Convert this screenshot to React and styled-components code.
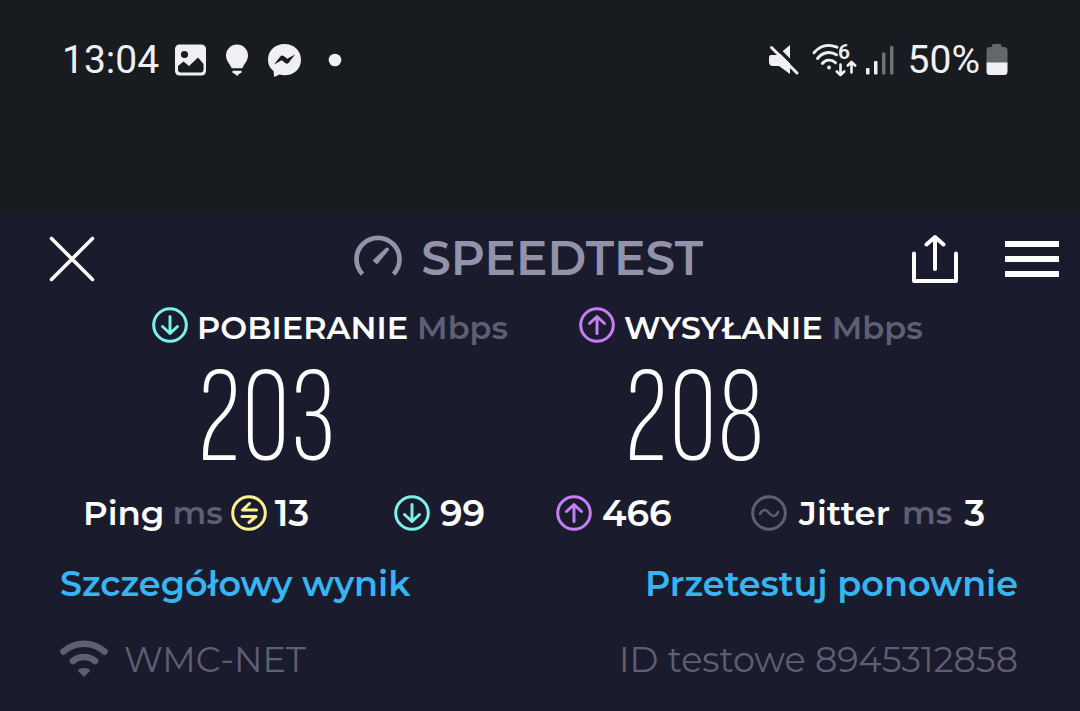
import React from "react";
import styled, { createGlobalStyle } from "styled-components";

const colors = {
  status: "#181c20",
  panel: "#1b1b2e",
  white: "#ffffff",
  soft: "#f0f0f2",
  muted: "#5f5e72",
  logo: "#9392ab",
  teal: "#7cf0ea",
  violet: "#c67df5",
  yellow: "#fdf08f",
  link: "#35b5f2",
};

const GlobalStyle = createGlobalStyle`
  * { box-sizing: border-box; }
  body { margin: 0; background: ${colors.panel}; }
`;

const Page = styled.div`
  min-height: 100vh;
  display: flex;
  flex-direction: column;
  background: ${colors.panel};
  color: ${colors.white};
  font-family: Montserrat, Inter, sans-serif;
`;

const StatusBar = styled.header`
  display: flex;
  justify-content: space-between;
  align-items: flex-start;
  padding: 40px 72px 131px 62px;
  background: ${colors.status};
  color: ${colors.soft};
  font-family: Roboto, sans-serif;
`;

const StatusGroup = styled.div`
  display: flex;
  align-items: center;
  height: 40px;
  gap: ${({ $gap }) => $gap}px;
`;

const StatusText = styled.span`
  font-size: 39px;
  line-height: 40px;
  white-space: nowrap;
`;

const Svg = styled.svg`
  display: block;
  flex: none;
  overflow: visible;
`;

const Panel = styled.main`
  flex: 1;
  display: flex;
  flex-direction: column;
`;

const TopBar = styled.div`
  display: grid;
  grid-template-columns: 6fr auto 7fr;
  align-items: center;
  padding: 24px 21px 0 48px;
`;

const Brand = styled.h1`
  display: flex;
  align-items: center;
  gap: 18px;
  margin: 0;
  color: ${colors.logo};
  font-size: 47px;
  line-height: 48px;
  font-weight: 600;
`;

const Actions = styled.div`
  display: flex;
  justify-content: flex-end;
  gap: 45px;
`;

const IconButton = styled.button`
  display: block;
  justify-self: start;
  padding: 0;
  border: 0;
  background: none;
  color: inherit;
  cursor: pointer;
`;

const Results = styled.section`
  display: grid;
  grid-template-columns: 1fr 1fr;
  padding: 24px 74px 0 152px;
`;

const ResultLabel = styled.h2`
  display: flex;
  align-items: flex-start;
  gap: 9px;
  margin: 0;
  font-size: 32px;
  line-height: 42px;
  font-weight: 600;
  white-space: nowrap;
`;

const Unit = styled.span`
  color: ${colors.muted};
  font-size: 32px;
`;

const ResultValue = styled.p`
  margin: 0;
  padding: 8px 0 0 45px;
  font-family: "Sofia Sans Extra Condensed", "Open Sans Condensed Light", Roboto, sans-serif;
  font-size: 138px;
  line-height: 124px;
  font-weight: 200;
`;

const Stats = styled.section`
  display: grid;
  grid-template-columns: 311fr 162fr 195fr 237fr;
  padding: 14px 92px 0 83px;
`;

const Stat = styled.div`
  display: flex;
  align-items: center;
  gap: ${({ $gap }) => $gap || 10}px;
  font-size: 34px;
  line-height: 36px;
  font-weight: 600;
  white-space: nowrap;
`;

const StatValue = styled.span`
  font-size: 36px;
`;

const Row = styled.div`
  display: flex;
  justify-content: space-between;
  align-items: center;
  padding: ${({ $top }) => $top}px 62px 0 60px;
`;

const Link = styled.a`
  color: ${colors.link};
  font-size: 35px;
  line-height: 40px;
  font-weight: 600;
  text-decoration: none;
`;

const Meta = styled.span`
  display: flex;
  align-items: center;
  gap: 16px;
  color: ${colors.muted};
  font-size: 35px;
  line-height: 40px;
  font-weight: 400;
`;

const shapes = {
  down: <path d="M18 9.500v17M10.500 19.500l7.500 7 7.500-7" />,
  up: <path d="M18 26.500v-17M10.500 16.500l7.500-7 7.500 7" />,
  ping: <path d="M25.500 15H11.500l7-6.500M11 21.500h14l-7 6" />,
  jitter: <path d="M9 19c2-5 6-5 9-1s7 4 9-1" strokeWidth="2.500" />,
};

function RoundIcon({ kind, color }) {
  return (
    <Svg width="36" height="36" viewBox="0 0 36 36" fill="none" stroke={color} strokeWidth="3" strokeLinecap="round" strokeLinejoin="round" aria-hidden="true">
      <circle cx="18" cy="18" r="16.300" />
      {shapes[kind]}
    </Svg>
  );
}

function Result({ kind, color, label, value }) {
  return (
    <div>
      <ResultLabel>
        <RoundIcon kind={kind} color={color} />
        {label}
        <Unit>Mbps</Unit>
      </ResultLabel>
      <ResultValue>{value}</ResultValue>
    </div>
  );
}

export default function App() {
  return (
    <Page>
      <GlobalStyle />
      <StatusBar>
        <StatusGroup $gap={16}>
          <StatusText>13:04</StatusText>
          <Svg width="32" height="32" viewBox="0 0 32 32">
            <rect x="0" y="0.500" width="31" height="31" rx="4.500" fill={colors.soft} />
            <circle cx="9.500" cy="10.500" r="3.600" fill={colors.status} />
            <path d="M3 22l5.500-4.500 5.500 4.500 9-8.500L28.500 20v5.500q0 3-3 3H6q-3 0-3-3z" fill={colors.status} />
          </Svg>
          <Svg width="28" height="34" viewBox="0 0 28 34" fill={colors.soft}>
            <path d="M14 1.500A11 11 0 0 1 25 12.500c0 5-3.200 7.500-5 11.500q-.5 1.300-1.500 1.300h-9Q8.500 25.300 8 24C6.200 20 3 17.500 3 12.500A11 11 0 0 1 14 1.500zM9.500 27.700h9v2l-2.500 1.300-2 2-2-2-2.500-1.300z" />
          </Svg>
          <Svg width="36" height="36" viewBox="0 0 36 36">
            <path d="M17.500 2C8 2 1 8.500 1 17.700c0 5 2 8.500 5.500 11.300l.7 6 5.300-2.400c1.500.5 3.200.7 5 .7 9.500 0 16.500-6.500 16.500-15.600S27 2 17.500 2z" fill={colors.soft} />
            <path d="M7 22.500l6.500-8.300q1.500-1.500 3.300-.2l3.500 2.800 7.700-4.300-6.300 8.200q-1.500 1.700-3.400.4l-3.600-2.800z" fill={colors.status} />
          </Svg>
          <Svg width="32" height="32" viewBox="0 0 32 32">
            <circle cx="16" cy="16" r="6.300" fill={colors.soft} />
          </Svg>
        </StatusGroup>
        <StatusGroup $gap={6}>
          <Svg width="38" height="34" viewBox="0 0 38 34">
            <path d="M3 12h7l12-10v29L11 23H5q-4 0-4-4v-4q0-3 2-3z" fill={colors.soft} />
            <path d="M4.500 0.500L32 28" stroke={colors.status} strokeWidth="3.500" />
            <path d="M3.500 4.500L29 30" stroke={colors.soft} strokeWidth="3" strokeLinecap="round" />
          </Svg>
          <Svg width="48" height="34" viewBox="0 0 48 34" fill="none" stroke={colors.soft} strokeWidth="2.900" strokeLinecap="round" strokeLinejoin="round">
            <path d="M2 9.800C8.500 2 17 1 25 4.200M5.500 15.500C10.500 9 18 7.800 24.500 11.800M10.300 20.500c3.500-4.300 9.500-4.500 13.200-.8" />
            <circle cx="17" cy="24.500" r="1.900" fill={colors.soft} stroke="none" />
            <path d="M28.500 21.500v10.500M24.800 28.500l3.700 3.700 3.700-3.700M39.500 29.500V19M35.800 22.500l3.700-3.700 3.700 3.700" strokeWidth="2.600" />
            <text x="26" y="16" fill={colors.soft} stroke="none" fontSize="21" fontWeight="600">6</text>
          </Svg>
          <Svg width="36" height="34" viewBox="0 0 36 34" fill={colors.soft}>
            <rect x="0" y="25" width="3.500" height="6.500" rx="1" />
            <rect x="8" y="18" width="3.500" height="13.500" rx="1" />
            <rect x="16" y="9.500" width="3.500" height="22" rx="1" opacity="0.400" />
            <rect x="24" y="3" width="3.500" height="28.500" rx="1" opacity="0.400" />
          </Svg>
          <StatusText>50%</StatusText>
          <Svg width="22" height="34" viewBox="0 0 22 34">
            <path d="M6 2.500q0-1.500 1.500-1.500h6.500q1.500 0 1.500 1.500V4H18q3.500 0 3.500 3.500V20h-21V7.500Q.5 4 4 4h2z" fill="#65686a" />
            <path d="M.5 19.500h21v9q0 3.500-3.500 3.500H4q-3.500 0-3.500-3.500z" fill={colors.soft} />
          </Svg>
        </StatusGroup>
      </StatusBar>

      <Panel>
        <TopBar>
          <IconButton aria-label="Zamknij">
            <Svg width="48" height="48" viewBox="0 0 48 48" stroke="currentColor" strokeWidth="3.600" strokeLinecap="round">
              <path d="M3.500 3.500l41 41M44.500 3.500l-41 41" />
            </Svg>
          </IconButton>
          <Brand>
            <Svg width="50" height="48" viewBox="0 0 50 48" aria-hidden="true">
              <path d="M9.500 39.200A21.500 21.500 0 1 1 40.500 39.200" fill="none" stroke="currentColor" strokeWidth="4.700" />
              <path d="M19.500 25.500L33 12.800q1.400-.8 2.400.2t.2 2.400L24 29.500z" fill="currentColor" />
            </Svg>
            SPEEDTEST
          </Brand>
          <Actions>
            <IconButton aria-label="Udostępnij">
              <Svg width="50" height="48" viewBox="0 0 50 48" fill="none" stroke="currentColor" strokeWidth="4" strokeLinecap="round" strokeLinejoin="round">
                <path d="M4 18.500V46h42V18.500M25 34V2.500M16.500 9.500L25 2l8.500 7.500" />
              </Svg>
            </IconButton>
            <IconButton aria-label="Menu">
              <Svg width="54" height="48" viewBox="0 0 54 48" fill="currentColor">
                <path d="M0 6h54v6H0zM0 21h54v6H0zM0 36h54v6H0z" />
              </Svg>
            </IconButton>
          </Actions>
        </TopBar>

        <Results>
          <Result kind="down" color={colors.teal} label="POBIERANIE" value="203" />
          <Result kind="up" color={colors.violet} label="WYSYŁANIE" value="208" />
        </Results>

        <Stats>
          <Stat $gap={8}>
            Ping <Unit>ms</Unit>
            <RoundIcon kind="ping" color={colors.yellow} />
            <StatValue>13</StatValue>
          </Stat>
          <Stat>
            <RoundIcon kind="down" color={colors.teal} />
            <StatValue>99</StatValue>
          </Stat>
          <Stat>
            <RoundIcon kind="up" color={colors.violet} />
            <StatValue>466</StatValue>
          </Stat>
          <Stat $gap={12}>
            <RoundIcon kind="jitter" color={colors.muted} />
            Jitter <Unit>ms</Unit> <StatValue>3</StatValue>
          </Stat>
        </Stats>

        <Row $top={33}>
          <Link href="#wynik">Szczegółowy wynik</Link>
          <Link href="#test">Przetestuj ponownie</Link>
        </Row>

        <Row $top={36}>
          <Meta>
            <Svg width="48" height="40" viewBox="0 0 48 40" fill="none" stroke="currentColor" strokeWidth="6.500" strokeLinecap="round" aria-hidden="true">
              <path d="M3.500 11.500C15 1 33 1 44.500 11.500M13 21c6-5.500 16-5.500 22 0" />
              <path d="M24 37l-6-6q0-3 6-3t6 3z" fill="currentColor" stroke="none" />
            </Svg>
            WMC-NET
          </Meta>
          <Meta>ID testowe 8945312858</Meta>
        </Row>
      </Panel>
    </Page>
  );
}
